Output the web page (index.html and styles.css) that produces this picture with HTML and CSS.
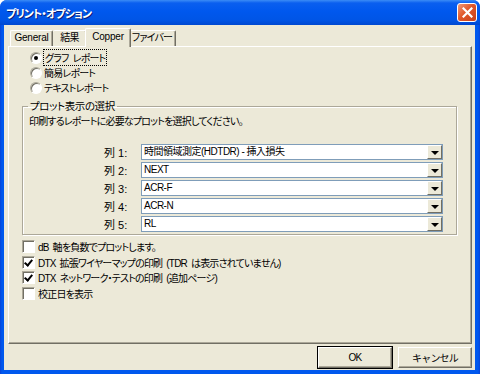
FILE: index.html
```html
<!DOCTYPE html>
<html lang="ja">
<head>
  <meta charset="UTF-8" />
  <title>プリント・オプション</title>
  <link rel="stylesheet" href="styles.css">
</head>
<body>
  <div class="window">
    <div class="titlebar">
      <span class="title">プリント・オプション</span>
      <button class="close">
        <svg width="11" height="11" viewBox="0 0 11 11"><path d="M1.5 1.5 L9.5 9.5 M9.5 1.5 L1.5 9.5" stroke="#fff" stroke-width="2.2" stroke-linecap="square"/></svg>
      </button>
    </div>

    <div class="frame">
      <div class="client">
        <div class="tabs">
          <div class="tab tab-general">General</div>
          <div class="tab tab-result">結果</div>
          <div class="tab tab-copper active">Copper</div>
          <div class="tab tab-fiber">ファイバー</div>
        </div>

        <div class="panel">
          <div class="radios">
            <label class="radio"><span class="dot checked"></span><span class="focus">グラフ レポート</span></label>
            <label class="radio"><span class="dot"></span><span>簡易レポート</span></label>
            <label class="radio"><span class="dot"></span><span>テキストレポート</span></label>
          </div>

          <fieldset class="group">
            <legend>プロット表示の選択</legend>
            <p class="hint">印刷するレポートに必要なプロットを選択してください。</p>
            <div class="rows">
              <div class="row"><span class="row-label">列 1:</span><div class="combo"><span class="value">時間領域測定(HDTDR) - 挿入損失</span><span class="arrow"></span></div></div>
              <div class="row"><span class="row-label">列 2:</span><div class="combo"><span class="value">NEXT</span><span class="arrow"></span></div></div>
              <div class="row"><span class="row-label">列 3:</span><div class="combo"><span class="value">ACR-F</span><span class="arrow"></span></div></div>
              <div class="row"><span class="row-label">列 4:</span><div class="combo"><span class="value">ACR-N</span><span class="arrow"></span></div></div>
              <div class="row"><span class="row-label">列 5:</span><div class="combo"><span class="value">RL</span><span class="arrow"></span></div></div>
            </div>
          </fieldset>

          <div class="checks">
            <label class="check"><span class="box"></span><span>dB 軸を負数でプロットします。</span></label>
            <label class="check"><span class="box checked"></span><span>DTX 拡張ワイヤーマップの印刷 (TDR は表示されていません)</span></label>
            <label class="check"><span class="box checked"></span><span>DTX ネットワーク・テストの印刷 (追加ページ)</span></label>
            <label class="check"><span class="box"></span><span>校正日を表示</span></label>
          </div>
        </div>

        <div class="buttons">
          <button class="btn default">OK</button>
          <button class="btn">キャンセル</button>
        </div>
      </div>
    </div>
  </div>
</body>
</html>
```

FILE: styles.css
```css
:root {
  --face: #ece9d8;
  --shadow: #aca899;
  --dark: #716f64;
  --xp-blue: #0055e5;
}

* {
  box-sizing: border-box;
  margin: 0;
  padding: 0;
}

body {
  width: 480px;
  height: 374px;
  overflow: hidden;
  font-family: "Liberation Sans", "Noto Sans CJK JP", sans-serif;
  font-size: 11px;
  color: #000;
  background: #fff;
  font-feature-settings: "palt";
}

.window {
  width: 480px;
  height: 374px;
  display: flex;
  flex-direction: column;
  background: var(--xp-blue);
  border-radius: 7px 7px 0 0;
  overflow: hidden;
}

.titlebar {
  height: 25px;
  display: flex;
  align-items: center;
  justify-content: space-between;
  padding: 0 3px 0 6px;
  background: linear-gradient(to bottom, #3b8cf6 0, #0a5fef 12%, #0058ee 45%, #0055e6 80%, #0048d0 100%);
}

.title {
  color: #fff;
  font-weight: bold;
  font-size: 11px;
  letter-spacing: -0.9px;
  text-shadow: 1px 1px #0a1e78;
}

.close {
  width: 20px;
  height: 19px;
  display: flex;
  align-items: center;
  justify-content: center;
  border: 1px solid #fff;
  border-radius: 3px;
  background: linear-gradient(135deg, #f09a7a 0, #e0582a 45%, #c8401a 100%);
}

.frame {
  flex: 1;
  display: flex;
  padding: 0 5px 4px 4px;
  background: linear-gradient(to right, #0843d8, #0058ee 2px, #0058ee calc(100% - 2px), #0843d8);
}

.client {
  flex: 1;
  display: flex;
  flex-direction: column;
  background: var(--face);
}

/* small japanese labels, narrowed like the dialog font */
.radio, .hint, .check, .tab, .btn {
  font-size: 10px;
  letter-spacing: -0.8px;
}

/* tabs */
.tabs {
  height: 21px;
  display: flex;
  align-items: flex-end;
  padding-left: 6px;
}

.tab {
  height: 16px;
  line-height: 14px;
  text-align: center;
  white-space: nowrap;
  border-top: 1px solid #fff;
  border-left: 1px solid #fff;
  border-right: 1px solid var(--dark);
  border-radius: 2px 2px 0 0;
  box-shadow: inset -1px 0 var(--shadow);
}

.tab-general { width: 43px; letter-spacing: -0.2px; }
.tab-result { width: 34px; border-left: none; }
.tab-copper { width: 42px; letter-spacing: -0.2px; }
.tab-fiber { width: 47px; border-left: none; }

.tab.active {
  height: 19px;
  width: 46px;
  margin: 0 -2px -1px;
  line-height: 15px;
  background: var(--face);
  position: relative;
  z-index: 1;
}

/* panel */
.panel {
  height: 298px;
  margin: 0 3px 0 4px;
  border-top: 1px solid #fff;
  border-left: 1px solid #fff;
  border-right: 1px solid var(--dark);
  border-bottom: 1px solid var(--dark);
  box-shadow: inset -1px -1px var(--shadow);
}

.radios {
  padding: 3px 0 0 21px;
}

.radio {
  height: 15px;
  display: flex;
  align-items: center;
  gap: 2px;
}

.dot {
  width: 12px;
  height: 12px;
  border-radius: 50%;
  background: #fff;
  border: 1px solid;
  border-color: var(--shadow) #fff #fff var(--shadow);
  box-shadow: inset 1px 1px var(--dark);
  display: flex;
  align-items: center;
  justify-content: center;
}

.dot.checked::after {
  content: "";
  width: 4px;
  height: 4px;
  border-radius: 50%;
  background: #000;
}

.focus {
  outline: 1px dotted #000;
  outline-offset: 0;
  padding: 0 1px;
  word-spacing: 2px;
}

/* group box */
.group {
  margin: 5px 14px 0 13px;
  border: 1px solid var(--shadow);
  box-shadow: inset 1px 1px #fff, 1px 1px #fff;
  padding: 0;
  min-width: 0;
}

.group legend {
  margin-left: 5px;
  padding: 0 2px;
  line-height: 13px;
  font-size: 10.5px;
  letter-spacing: -0.4px;
}

.hint {
  margin: 3px 0 0 6px;
  line-height: 12px;
}

.rows {
  margin-top: 15px;
  padding-bottom: 1px;
}

.row {
  display: grid;
  grid-template-columns: 118px 302px;
  align-items: center;
  height: 18px;
}

.row-label {
  padding-left: 81px;
}

.combo {
  height: 16px;
  display: flex;
  align-items: stretch;
  background: #fff;
  border: 1px solid #7f9db9;
}

.combo .value {
  flex: 1;
  line-height: 14px;
  padding-left: 2px;
  font-size: 10px;
  letter-spacing: -0.5px;
}

.arrow {
  width: 15px;
  background: var(--face);
  border: 1px solid;
  border-color: #fff var(--dark) var(--dark) #fff;
  display: flex;
  align-items: center;
  justify-content: center;
}

.arrow::after {
  content: "";
  border-left: 4px solid transparent;
  border-right: 4px solid transparent;
  border-top: 4px solid #000;
  margin-top: 1px;
}

/* checkboxes */
.checks {
  margin-top: 4px;
  padding-left: 13px;
}

.check {
  height: 15.5px;
  display: flex;
  align-items: center;
  gap: 3px;
}

.check span + span {
  word-spacing: 2px;
}

.box {
  width: 13px;
  height: 13px;
  background: #fff;
  border: 1px solid;
  border-color: var(--shadow) #fff #fff var(--shadow);
  box-shadow: inset 1px 1px var(--dark);
  position: relative;
}

.box.checked::after {
  content: "";
  position: absolute;
  left: 3px;
  top: 1px;
  width: 3px;
  height: 6px;
  border-right: 2px solid #000;
  border-bottom: 2px solid #000;
  transform: rotate(40deg);
}

/* buttons */
.buttons {
  display: flex;
  justify-content: flex-end;
  gap: 6px;
  padding: 3px 3px 0 0;
}

.btn {
  width: 74px;
  height: 21px;
  font-family: inherit;
  background: var(--face);
  border: 1px solid;
  border-color: #fff var(--dark) var(--dark) #fff;
  box-shadow: inset -1px -1px var(--shadow);
}

.btn.default {
  outline: 1px solid #000;
  outline-offset: 0;
}
```
